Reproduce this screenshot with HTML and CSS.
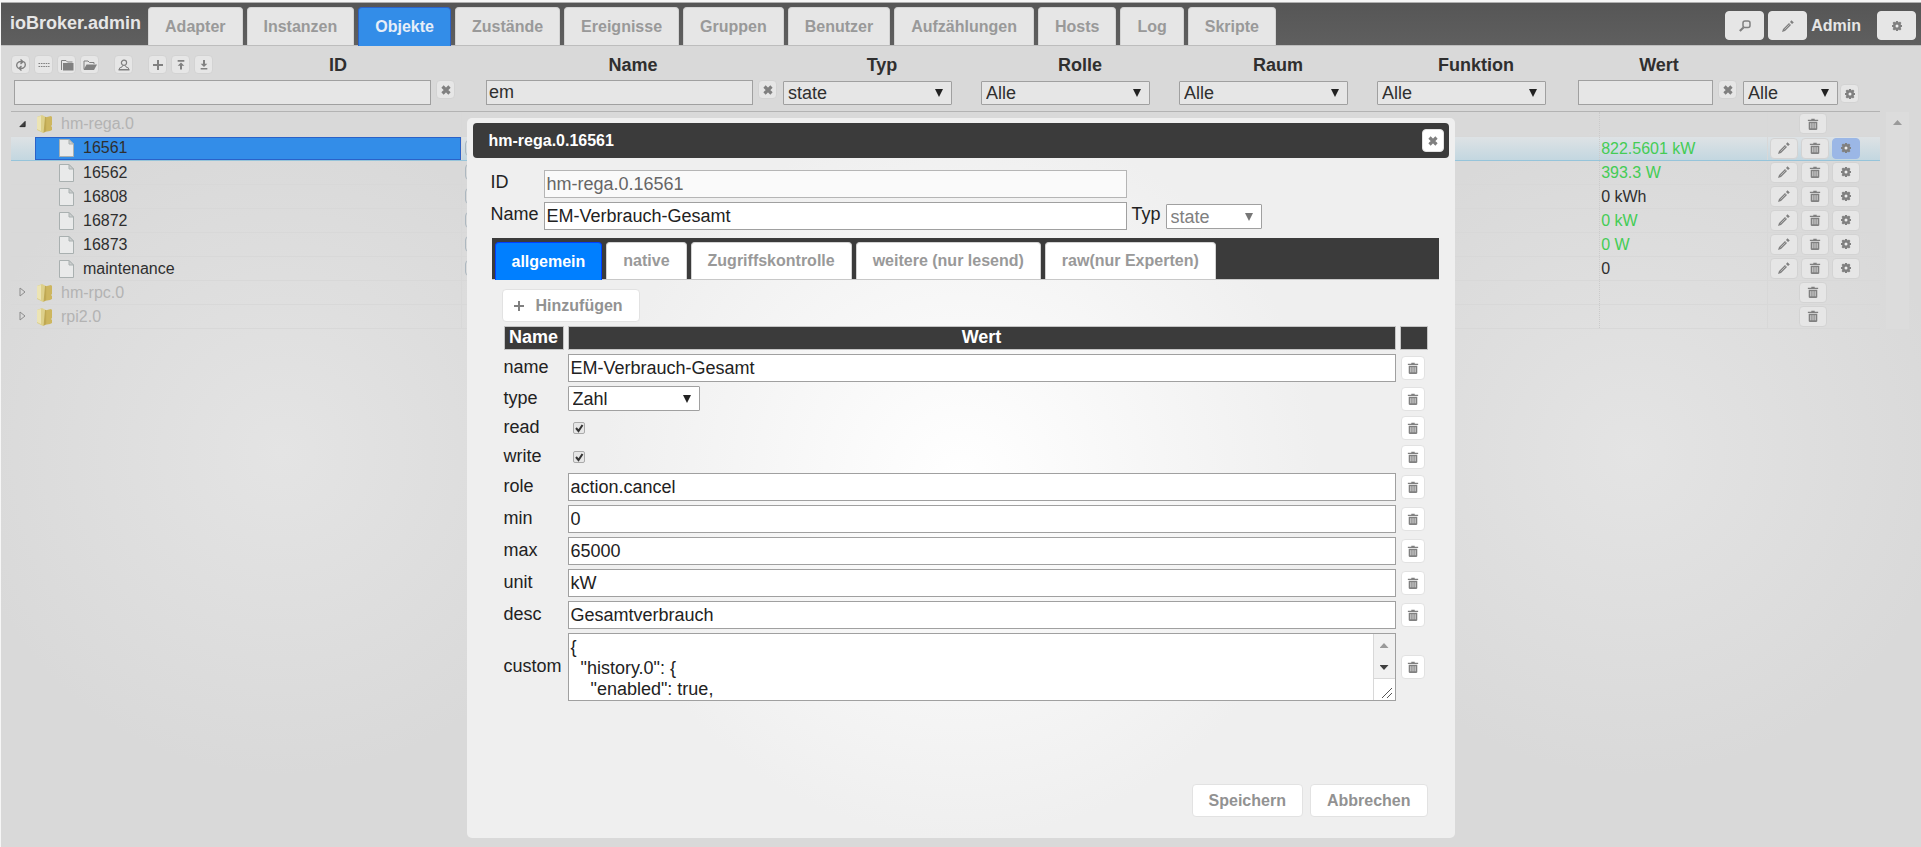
FILE: index.html
```html
<!DOCTYPE html>
<html lang="de">
<head>
<meta charset="utf-8">
<title>ioBroker.admin</title>
<link rel="stylesheet" href="styles.css">
</head>
<body>
<svg class="sprite" aria-hidden="true">
  <symbol id="i-trash" viewBox="0 0 12 14"><path fill="currentColor" d="M4 1h4v1h4v1.500H0V2h4zM1 4.500h10V13l-1 1H2l-1-1z"/><path stroke="#eee" stroke-width="1" d="M3.500 6v6M6 6v6M8.500 6v6"/></symbol>
  <symbol id="i-pencil" viewBox="0 0 12 12"><path fill="currentColor" d="M0 12l1-3 6-6 2 2-6 6zM8 2l1.500-1.800L11.800 2.500 10 4z"/><path stroke="#eee" stroke-width=".5" d="M2.500 9.500l5-5"/></symbol>
  <symbol id="i-gear" viewBox="0 0 12 12"><path stroke="currentColor" stroke-width="2.200" d="M6 1v10M1 6h10M2.300 2.300l7.400 7.400M9.700 2.300L2.300 9.700"/><circle cx="6" cy="6" r="4" fill="currentColor"/><circle cx="6" cy="6" r="1.500" fill="#eee"/></symbol>
  <symbol id="i-close" viewBox="0 0 10 10"><path stroke="currentColor" stroke-width="3.200" d="M1.500 1.500l7 7M8.500 1.500l-7 7"/></symbol>
  <symbol id="i-plus" viewBox="0 0 10 10"><path stroke="currentColor" stroke-width="2" d="M5 0v10M0 5h10"/></symbol>
  <symbol id="i-search" viewBox="0 0 12 12"><rect x="4" y="1" width="7" height="6.500" rx="2" fill="none" stroke="currentColor" stroke-width="1.500"/><path stroke="currentColor" stroke-width="2.200" d="M4.500 7.500L.8 11"/></symbol>
  <symbol id="i-refresh" viewBox="0 0 12 12"><path fill="none" stroke="currentColor" stroke-width="1.400" d="M3.500 9.500C1 8 1 4 4 2.800h3M8.500 2.500C11 4 11 8 8 9.200H5M5.500.5L8 2.800 5.500 5M6.500 7L4 9.200l2.500 2.300"/></symbol>
  <symbol id="i-lines" viewBox="0 0 12 12"><path stroke="currentColor" stroke-width="1" stroke-dasharray="1.600 .8" d="M.5 4.500h11M.5 7.500h11"/></symbol>
  <symbol id="i-folder" viewBox="0 0 13 12"><path fill="none" stroke="currentColor" d="M1 11V1.500h4.500L7 3h5"/><path fill="currentColor" d="M2.500 4H13v7.500H2.500z"/></symbol>
  <symbol id="i-folder-open" viewBox="0 0 14 12"><path fill="none" stroke="currentColor" d="M1 10V2h4l1.500 1.500H11V5"/><path fill="currentColor" d="M3.500 5.500H14l-3 5.500H.5z"/></symbol>
  <symbol id="i-person" viewBox="0 0 12 12"><circle cx="6" cy="3.800" r="2.600" fill="none" stroke="currentColor" stroke-width="1.200"/><path fill="none" stroke="currentColor" d="M4.500 6.500L4 8l-2.500 1v1.500h9V9L8 8l-.5-1.500"/><path fill="currentColor" d="M.5 10h11v1.500H.5z"/></symbol>
  <symbol id="i-up" viewBox="0 0 10 12"><path fill="currentColor" d="M1 0h8v2H1zM5 3l4 4H6.200v4.500H3.800V7H1z"/></symbol>
  <symbol id="i-down" viewBox="0 0 10 12"><path fill="currentColor" d="M1 9.500h8v2H1zM5 8.500l-4-4h2.800V0h2.400v4.500H9z"/></symbol>
  <symbol id="i-page" viewBox="0 0 15 18"><path fill="#e9eaea" stroke="#a9b0b0" d="M.5.500h9.500l4.500 4.500v12.500H.5z"/><path fill="#cdd0d0" stroke="#a9b0b0" d="M10 .5V5h4.500z"/></symbol>
  <symbol id="i-book" viewBox="0 0 15 18"><path fill="#cdb65f" d="M6 3l8-2 1 1v8l-1 1 1 1v3l-2 1-6 1z"/><path fill="#ddd08b" d="M0 2l5-2 4 2v14l-3 2-6-3z"/><path fill="#ece4b4" d="M0 2l4-1v15l-4-2z"/><path fill="#bfa853" d="M8 2h1.200v14L6.500 18z"/></symbol>
  <symbol id="i-closed" viewBox="0 0 7 10"><path fill="none" stroke="#8c8c8c" d="M1 1l5 4-5 4z"/></symbol>
  <symbol id="i-open" viewBox="0 0 8 8"><path fill="#404040" stroke="#222" d="M7 1v6H1z"/></symbol>
</svg>

<header class="topbar">
  <h1 class="brand">ioBroker.admin</h1>
  <nav class="tabs main-tabs">
    <button class="tab">Adapter</button>
    <button class="tab">Instanzen</button>
    <button class="tab active">Objekte</button>
    <button class="tab">Zustände</button>
    <button class="tab">Ereignisse</button>
    <button class="tab">Gruppen</button>
    <button class="tab">Benutzer</button>
    <button class="tab">Aufzählungen</button>
    <button class="tab">Hosts</button>
    <button class="tab">Log</button>
    <button class="tab">Skripte</button>
  </nav>
  <div class="user-tools">
    <button class="btn tool" aria-label="Suchen"><svg class="ic"><use href="#i-search"/></svg></button>
    <button class="btn tool" aria-label="Bearbeiten"><svg class="ic"><use href="#i-pencil"/></svg></button>
    <span class="user">Admin</span>
    <button class="btn tool" aria-label="Einstellungen"><svg class="ic"><use href="#i-gear"/></svg></button>
  </div>
</header>

<main class="objects">
  <section class="filters">
    <div class="filter">
      <div class="id-head">
        <div class="toolbar">
          <button class="btn mini" aria-label="Aktualisieren"><svg class="ic"><use href="#i-refresh"/></svg></button>
          <button class="btn mini" aria-label="Liste"><svg class="ic"><use href="#i-lines"/></svg></button>
          <button class="btn mini" aria-label="Zuklappen"><svg class="ic wide"><use href="#i-folder"/></svg></button>
          <button class="btn mini" aria-label="Aufklappen"><svg class="ic wide"><use href="#i-folder-open"/></svg></button>
          <button class="btn mini apart" aria-label="Expertenmodus"><svg class="ic"><use href="#i-person"/></svg></button>
          <button class="btn mini apart" aria-label="Neu"><svg class="ic small"><use href="#i-plus"/></svg></button>
          <button class="btn mini" aria-label="Hochladen"><svg class="ic small"><use href="#i-up"/></svg></button>
          <button class="btn mini" aria-label="Herunterladen"><svg class="ic small"><use href="#i-down"/></svg></button>
        </div>
        <label class="head" for="f-id">ID</label>
      </div>
      <div class="control pad-id"><input id="f-id" class="field" type="text"><button class="btn mini" aria-label="ID-Filter löschen"><svg class="ic small"><use href="#i-close"/></svg></button></div>
    </div>
    <div class="filter">
      <label class="head" for="f-name">Name</label>
      <div class="control pad-name"><input id="f-name" class="field" type="text" value="em"><button class="btn mini" aria-label="Namensfilter löschen"><svg class="ic small"><use href="#i-close"/></svg></button></div>
    </div>
    <div class="filter">
      <label class="head" for="f-typ">Typ</label>
      <div class="control pad-select"><select id="f-typ" class="select"><option>state</option></select></div>
    </div>
    <div class="filter">
      <label class="head" for="f-rolle">Rolle</label>
      <div class="control pad-select"><select id="f-rolle" class="select"><option>Alle</option></select></div>
    </div>
    <div class="filter">
      <label class="head" for="f-raum">Raum</label>
      <div class="control pad-select"><select id="f-raum" class="select"><option>Alle</option></select></div>
    </div>
    <div class="filter">
      <label class="head" for="f-funktion">Funktion</label>
      <div class="control pad-select"><select id="f-funktion" class="select"><option>Alle</option></select></div>
    </div>
    <div class="filter">
      <label class="head" for="f-wert">Wert</label>
      <div class="control pad-name"><input id="f-wert" class="field" type="text"><button class="btn mini" aria-label="Wertfilter löschen"><svg class="ic small"><use href="#i-close"/></svg></button></div>
    </div>
    <div class="filter">
      <div class="head"></div>
      <div class="control pad-last"><select class="select" aria-label="Historie"><option>Alle</option></select><button class="btn mini low" aria-label="Spalten"><svg class="ic"><use href="#i-gear"/></svg></button></div>
    </div>
  </section>

  <div class="list">
    <table class="tree">
      <colgroup><col class="c-tree"><col class="c-info"><col class="c-value"><col class="c-actions"></colgroup>
      <tbody>
        <tr>
          <td><div class="node"><span class="twist"><svg class="tri"><use href="#i-open"/></svg></span><span class="item root"><svg class="pic"><use href="#i-book"/></svg>hm-rega.0</span></div></td>
          <td></td><td class="val"></td>
          <td><div class="acts solo"><button class="btn act" aria-label="Löschen"><svg class="ic"><use href="#i-trash"/></svg></button></div></td>
        </tr>
        <tr class="selected">
          <td><div class="node"><span class="twist"></span><span class="item"><svg class="pic"><use href="#i-page"/></svg>16561</span></div></td>
          <td><span class="copy"></span></td><td class="val ok">822.5601 kW</td>
          <td><div class="acts"><button class="btn act" aria-label="Bearbeiten"><svg class="ic"><use href="#i-pencil"/></svg></button><button class="btn act" aria-label="Löschen"><svg class="ic"><use href="#i-trash"/></svg></button><button class="btn act on" aria-label="Einstellungen"><svg class="ic"><use href="#i-gear"/></svg></button></div></td>
        </tr>
        <tr>
          <td><div class="node"><span class="twist"></span><span class="item"><svg class="pic"><use href="#i-page"/></svg>16562</span></div></td>
          <td><span class="copy"></span></td><td class="val ok">393.3 W</td>
          <td><div class="acts"><button class="btn act" aria-label="Bearbeiten"><svg class="ic"><use href="#i-pencil"/></svg></button><button class="btn act" aria-label="Löschen"><svg class="ic"><use href="#i-trash"/></svg></button><button class="btn act" aria-label="Einstellungen"><svg class="ic"><use href="#i-gear"/></svg></button></div></td>
        </tr>
        <tr>
          <td><div class="node"><span class="twist"></span><span class="item"><svg class="pic"><use href="#i-page"/></svg>16808</span></div></td>
          <td><span class="copy"></span></td><td class="val">0 kWh</td>
          <td><div class="acts"><button class="btn act" aria-label="Bearbeiten"><svg class="ic"><use href="#i-pencil"/></svg></button><button class="btn act" aria-label="Löschen"><svg class="ic"><use href="#i-trash"/></svg></button><button class="btn act" aria-label="Einstellungen"><svg class="ic"><use href="#i-gear"/></svg></button></div></td>
        </tr>
        <tr>
          <td><div class="node"><span class="twist"></span><span class="item"><svg class="pic"><use href="#i-page"/></svg>16872</span></div></td>
          <td><span class="copy"></span></td><td class="val ok">0 kW</td>
          <td><div class="acts"><button class="btn act" aria-label="Bearbeiten"><svg class="ic"><use href="#i-pencil"/></svg></button><button class="btn act" aria-label="Löschen"><svg class="ic"><use href="#i-trash"/></svg></button><button class="btn act" aria-label="Einstellungen"><svg class="ic"><use href="#i-gear"/></svg></button></div></td>
        </tr>
        <tr>
          <td><div class="node"><span class="twist"></span><span class="item"><svg class="pic"><use href="#i-page"/></svg>16873</span></div></td>
          <td><span class="copy"></span></td><td class="val ok">0 W</td>
          <td><div class="acts"><button class="btn act" aria-label="Bearbeiten"><svg class="ic"><use href="#i-pencil"/></svg></button><button class="btn act" aria-label="Löschen"><svg class="ic"><use href="#i-trash"/></svg></button><button class="btn act" aria-label="Einstellungen"><svg class="ic"><use href="#i-gear"/></svg></button></div></td>
        </tr>
        <tr>
          <td><div class="node"><span class="twist"></span><span class="item"><svg class="pic"><use href="#i-page"/></svg>maintenance</span></div></td>
          <td><span class="copy"></span></td><td class="val">0</td>
          <td><div class="acts"><button class="btn act" aria-label="Bearbeiten"><svg class="ic"><use href="#i-pencil"/></svg></button><button class="btn act" aria-label="Löschen"><svg class="ic"><use href="#i-trash"/></svg></button><button class="btn act" aria-label="Einstellungen"><svg class="ic"><use href="#i-gear"/></svg></button></div></td>
        </tr>
        <tr>
          <td><div class="node"><span class="twist"><svg class="tri"><use href="#i-closed"/></svg></span><span class="item root"><svg class="pic"><use href="#i-book"/></svg>hm-rpc.0</span></div></td>
          <td></td><td class="val"></td>
          <td><div class="acts solo"><button class="btn act" aria-label="Löschen"><svg class="ic"><use href="#i-trash"/></svg></button></div></td>
        </tr>
        <tr>
          <td><div class="node"><span class="twist"><svg class="tri"><use href="#i-closed"/></svg></span><span class="item root"><svg class="pic"><use href="#i-book"/></svg>rpi2.0</span></div></td>
          <td></td><td class="val"></td>
          <td><div class="acts solo"><button class="btn act" aria-label="Löschen"><svg class="ic"><use href="#i-trash"/></svg></button></div></td>
        </tr>
      </tbody>
    </table>
    <div class="scroll"><span class="arrow up"></span></div>
  </div>
</main>

<div class="dialog" role="dialog" aria-labelledby="dlg-title">
  <div class="dlg-bar">
    <h2 id="dlg-title" class="dlg-title">hm-rega.0.16561</h2>
    <button class="btn dlg-close" aria-label="Schließen"><svg class="ic small"><use href="#i-close"/></svg></button>
  </div>
  <div class="dlg-body">
    <div class="meta">
      <label for="o-id">ID</label>
      <input id="o-id" class="field tall" type="text" value="hm-rega.0.16561" disabled>
      <label class="line2" for="o-name">Name</label>
      <input id="o-name" class="field tall" type="text" value="EM-Verbrauch-Gesamt">
      <div class="kind"><label for="o-typ">Typ</label><select id="o-typ" class="select" disabled><option>state</option></select></div>
    </div>
    <div class="tabs dlg-tabs">
      <button class="tab active">allgemein</button>
      <button class="tab">native</button>
      <button class="tab">Zugriffskontrolle</button>
      <button class="tab">weitere (nur lesend)</button>
      <button class="tab">raw(nur Experten)</button>
    </div>
    <div class="panel">
      <button class="btn text add"><svg class="ic small"><use href="#i-plus"/></svg>Hinzufügen</button>
      <table class="props">
        <thead><tr><th class="p-name">Name</th><th>Wert</th><th class="p-del"></th></tr></thead>
        <tbody>
          <tr><td><label for="p-name">name</label></td><td><input id="p-name" class="field tall" type="text" value="EM-Verbrauch-Gesamt"></td><td><button class="btn del" aria-label="name löschen"><svg class="ic"><use href="#i-trash"/></svg></button></td></tr>
          <tr><td><label for="p-type">type</label></td><td><select id="p-type" class="select short"><option>Zahl</option></select></td><td><button class="btn del" aria-label="type löschen"><svg class="ic"><use href="#i-trash"/></svg></button></td></tr>
          <tr><td><label for="p-read">read</label></td><td><input id="p-read" class="check" type="checkbox" checked></td><td><button class="btn del" aria-label="read löschen"><svg class="ic"><use href="#i-trash"/></svg></button></td></tr>
          <tr><td><label for="p-write">write</label></td><td><input id="p-write" class="check" type="checkbox" checked></td><td><button class="btn del" aria-label="write löschen"><svg class="ic"><use href="#i-trash"/></svg></button></td></tr>
          <tr><td><label for="p-role">role</label></td><td><input id="p-role" class="field tall" type="text" value="action.cancel"></td><td><button class="btn del" aria-label="role löschen"><svg class="ic"><use href="#i-trash"/></svg></button></td></tr>
          <tr><td><label for="p-min">min</label></td><td><input id="p-min" class="field tall" type="text" value="0"></td><td><button class="btn del" aria-label="min löschen"><svg class="ic"><use href="#i-trash"/></svg></button></td></tr>
          <tr><td><label for="p-max">max</label></td><td><input id="p-max" class="field tall" type="text" value="65000"></td><td><button class="btn del" aria-label="max löschen"><svg class="ic"><use href="#i-trash"/></svg></button></td></tr>
          <tr><td><label for="p-unit">unit</label></td><td><input id="p-unit" class="field tall" type="text" value="kW"></td><td><button class="btn del" aria-label="unit löschen"><svg class="ic"><use href="#i-trash"/></svg></button></td></tr>
          <tr><td><label for="p-desc">desc</label></td><td><input id="p-desc" class="field tall" type="text" value="Gesamtverbrauch"></td><td><button class="btn del" aria-label="desc löschen"><svg class="ic"><use href="#i-trash"/></svg></button></td></tr>
          <tr><td><label for="p-custom">custom</label></td><td><div class="area-box"><textarea id="p-custom" class="area" rows="3">{
  "history.0": {
    "enabled": true,</textarea><div class="area-scroll"><span class="arrow up"></span><span class="arrow down"></span><svg class="grip" viewBox="0 0 12 12"><path stroke="#555" d="M1 11L11 1M6 11l5-5"/></svg></div></div></td><td><button class="btn del" aria-label="custom löschen"><svg class="ic"><use href="#i-trash"/></svg></button></td></tr>
        </tbody>
      </table>
    </div>
    <div class="dlg-actions">
      <button class="btn text">Speichern</button>
      <button class="btn text">Abbrechen</button>
    </div>
  </div>
</div>
</body>
</html>
```

FILE: styles.css
```css
* { box-sizing: border-box; }

html { background: #f6f6f6; }

body {
  margin: 0;
  padding: 2px 0 0 1px;
  min-height: 100vh;
  display: flex;
  flex-direction: column;
  font: 16px/20px "Liberation Sans", Arial, sans-serif;
  color: #2f2f2f;
}

.sprite { position: absolute; width: 0; height: 0; }

button, input, select, textarea { font: inherit; color: inherit; margin: 0; }

.ic { width: 12px; height: 12px; display: block; color: #808080; }
.ic.small { width: 10px; height: 10px; }
.ic.wide { width: 14px; }

/* Buttons */
.btn {
  display: flex;
  align-items: center;
  justify-content: center;
  flex: none;
  padding: 0;
  background: #e6e6e6;
  border: 1px solid #d3d3d3;
  border-radius: 4px;
}
.tool { width: 39px; height: 29px; border-color: #e6e6e6; }
.mini { width: 19px; height: 19px; }
.act { width: 28px; height: 21px; }
.act.on { background: #9bb7e6; border-color: #9bb7e6; }

/* Top bar */
.topbar {
  display: flex;
  align-items: flex-start;
  height: 44px;
  border-top: 1px solid #b0b0b0;
  border-bottom: 1px solid #bdbdbd;
  background: linear-gradient(#565656, #5f5f5f);
}
.brand {
  margin: 0;
  padding: 10px 7px 0 9px;
  font-size: 18px;
  line-height: 20px;
  color: #e6e6e6;
}
.tabs { display: flex; align-items: stretch; gap: 4px; }
.tab {
  padding: 0 16px;
  border: 1px solid #d3d3d3;
  border-bottom: 0;
  border-radius: 4px 4px 0 0;
  background: #e6e6e6;
  color: #999;
  font-weight: bold;
}
.main-tabs { height: 38px; margin-top: 4px; }
.main-tabs .active {
  height: 39px;
  background: #338de8;
  border-color: #2b62c8;
  color: #e6eef8;
}
.user-tools {
  display: flex;
  align-items: center;
  gap: 4px;
  margin: 8px 5px 0 auto;
}
.user { padding-right: 12px; font-weight: bold; color: #e6e6e6; }

/* Object list */
.objects {
  flex: 1;
  padding: 0 12px 0 10px;
  background:
    radial-gradient(circle at 281px 406px, #e4e4e4, rgba(217, 217, 217, 0) 325px),
    radial-gradient(circle at calc(100% - 289px) 406px, #e4e4e4, rgba(217, 217, 217, 0) 325px),
    #d9d9d9;
}
.filters {
  display: grid;
  grid-template-columns: 472fr 300fr 198fr 198fr 198fr 198fr 168fr 137fr;
  margin-right: 29px;
  padding: 9px 0 6px;
  border-bottom: 1px solid #b3b3b3;
}
.filter { display: flex; flex-direction: column; gap: 5px; min-width: 0; }
.head {
  display: block;
  flex: 1;
  height: 20px;
  font-size: 18px;
  font-weight: bold;
  text-align: center;
}
.id-head { display: flex; padding-right: 20px; }
.toolbar { display: flex; gap: 4px; height: 20px; }
.apart { margin-left: 11px; }
.control { display: flex; align-items: flex-start; gap: 5px; height: 25px; }
.pad-id { padding: 0 28px 0 3px; }
.pad-name { padding: 0 6px 0 3px; }
.pad-select { padding: 1px 29px 0 0; }
.pad-last { padding: 1px 21px 0 0; gap: 2px; }
.low { margin-top: 3px; }

.field {
  flex: 1;
  min-width: 0;
  width: 100%;
  height: 25px;
  padding: 0 2px;
  border: 1px solid #a0a0a0;
  background: #e6e6e6;
  font-size: 18px;
}
.select {
  appearance: none;
  flex: 1;
  min-width: 0;
  height: 24px;
  padding: 0 4px;
  border: 1px solid #a0a0a0;
  border-radius: 1px;
  font-size: 18px;
  line-height: 20px;
  background: #e6e6e6 url("data:image/svg+xml,%3Csvg xmlns='http://www.w3.org/2000/svg' width='8' height='8'%3E%3Cpath d='M0 0h8L4 8z' fill='%23222'/%3E%3C/svg%3E") no-repeat right 8px center;
}

.list { display: flex; gap: 6px; }
.tree {
  flex: 1;
  table-layout: fixed;
  border-collapse: collapse;
}
.c-tree { width: 24.1%; }
.c-info { width: 60.9%; }
.c-value { width: 9%; }
.c-actions { width: 6%; }
.tree td { height: 24px; padding: 0; border: 1px solid #d8d8d8; border-width: 0 0 1px 1px; }
.tree td:first-child { border-left: 0; }
.tree .val { padding: 1px 0 0 1px; border-left: 1px dotted #cacaca; }
.tree .ok { color: #44cc55; }
.node { display: flex; align-items: center; height: 23px; }
.twist { width: 24px; padding-left: 8px; }
.tri { display: block; width: 7px; height: 10px; }
.item {
  flex: 1;
  display: flex;
  align-items: center;
  gap: 9px;
  height: 23px;
  padding: 1px 0 0 24px;
}
.item.root { padding-left: 2px; color: #b3b3b3; }
.pic { width: 15px; height: 18px; }
.selected { background: linear-gradient(#dfe3e5, #c3d7e0); }
.tree .selected td { border-top: 1px solid #96c4da; border-bottom: 1px solid #96c4da; }
.selected .item { background: #338de8; border: 1px solid #2b62c8; padding: 0 0 0 23px; }
.acts { display: flex; gap: 3px; padding-left: 2px; }
.acts.solo { padding-left: 31px; }
.copy { display: block; width: 20px; height: 16px; margin-left: 3px; border: 1px solid #adb8c0; border-radius: 4px; }
.scroll { display: flex; justify-content: center; width: 23px; padding-top: 8px; background: #dcdcdc; }

.arrow { display: block; width: 9px; height: 5px; }
.arrow.up { background: #9a9a9a; clip-path: polygon(50% 0, 100% 100%, 0 100%); }
.arrow.down { background: #404040; clip-path: polygon(0 0, 100% 0, 50% 100%); }

/* Object dialog */
.dialog {
  position: absolute;
  top: 118px;
  left: 50%;
  width: 988px;
  max-width: 96%;
  transform: translateX(-50%);
  padding: 5px 6px 21px;
  border-radius: 5px;
  background: radial-gradient(circle at 50% 50%, #fff, #efefef 360px);
  color: #222;
}
.dialog .btn { background: #fff; border-color: #e2e2e2; }
.dialog .field, .dialog .select, .dialog .tab { background-color: #fff; }
.dlg-bar {
  display: flex;
  align-items: center;
  justify-content: space-between;
  height: 35px;
  padding: 0 5px 0 16px;
  border-radius: 4px;
  background: #3b3b3b;
}
.dlg-title { margin: 0; font-size: 16px; line-height: 20px; color: #fff; }
.dlg-close { width: 22px; height: 23px; }
.dlg-body { padding: 12px 10px 0 18px; }
.meta {
  display: grid;
  grid-template-columns: 49px 583px 1fr;
  gap: 4px;
  font-size: 18px;
}
.meta > label { padding-top: 2px; }
.line2 { grid-column: 1; }
.tall { height: 28px; display: block; }
.kind { display: flex; align-items: flex-start; gap: 5px; padding: 2px 0 0 1px; }
.kind .select { flex: none; width: 96px; height: 25px; }
.dialog .field:disabled { background: #fafafa; border-color: #b5b5b5; color: #666; }
.kind .select:disabled {
  opacity: 1;
  color: #808080;
  background-image: url("data:image/svg+xml,%3Csvg xmlns='http://www.w3.org/2000/svg' width='8' height='8'%3E%3Cpath d='M0 0h8L4 8z' fill='%23777'/%3E%3C/svg%3E");
}
.dlg-tabs {
  height: 42px;
  margin: 8px 0 0 1px;
  padding: 4px 0 0 3px;
  background: #3b3b3b;
  border-bottom: 1px solid #c8c8c8;
}
.dialog .tab.active { height: 38px; background: #007fff; border-color: #003eff; color: #fff; }
.panel { padding: 9px 7px 0 9px; }
.text {
  height: 33px;
  padding: 0 16px;
  font-weight: bold;
  color: #929292;
}
.add { gap: 12px; margin-left: 2px; padding: 0 16px 0 11px; }
.props {
  width: 100%;
  border-spacing: 4px;
  font-size: 18px;
  line-height: 20px;
}
.props th {
  height: 24px;
  padding: 0 0 2px;
  border: 1px solid #c4c4c4;
  background: #3b3b3b;
  color: #fff;
}
.props td { padding: 0; height: 25px; }
.props tbody td:first-child { padding-bottom: 2px; }
.p-name { width: 60px; }
.p-del { width: 28px; }
.del { width: 24px; height: 24px; margin-left: 1px; }
.short { display: block; width: 132px; height: 25px; }
.check {
  appearance: none;
  display: block;
  width: 12px;
  height: 12px;
  margin-left: 5px;
  border: 1px solid #aaa;
  border-radius: 2px;
  background: #e6e6e6 url("data:image/svg+xml,%3Csvg xmlns='http://www.w3.org/2000/svg' width='10' height='10'%3E%3Cpath d='M2 5l2.500 3L8.500 2' fill='none' stroke='%23333' stroke-width='2'/%3E%3C/svg%3E") no-repeat center;
}
.area-box { position: relative; }
.area {
  display: block;
  width: 100%;
  height: 68px;
  padding: 3px 24px 0 2px;
  border: 1px solid #a0a0a0;
  background: #fff;
  font-size: 18px;
  line-height: 21px;
  resize: none;
  overflow: hidden;
}
.area-scroll {
  position: absolute;
  top: 1px;
  right: 1px;
  bottom: 1px;
  width: 22px;
  display: flex;
  flex-direction: column;
  align-items: center;
  gap: 17px;
  padding-top: 9px;
  border-left: 1px solid #d8d8d8;
  background: linear-gradient(#f1f1f1 44px, #d8d8d8 44px, #d8d8d8 45px, #fff 45px);
}
.grip { width: 12px; height: 12px; margin: 0 0 0 6px; }
.dlg-actions {
  display: flex;
  justify-content: flex-end;
  gap: 7px;
  margin-top: 79px;
  padding-right: 11px;
}
```
